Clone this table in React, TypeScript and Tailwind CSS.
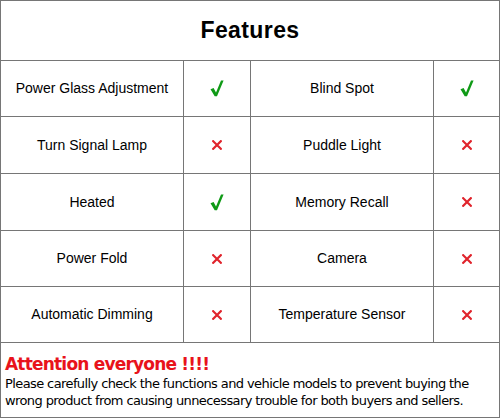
const rows: { left: string; leftOk: boolean; right: string; rightOk: boolean; h: string }[] = [
  { left: "Power Glass Adjustment", leftOk: true, right: "Blind Spot", rightOk: true, h: "h-[56px]" },
  { left: "Turn Signal Lamp", leftOk: false, right: "Puddle Light", rightOk: false, h: "h-[57px]" },
  { left: "Heated", leftOk: true, right: "Memory Recall", rightOk: false, h: "h-[57px]" },
  { left: "Power Fold", leftOk: false, right: "Camera", rightOk: false, h: "h-[56px]" },
  { left: "Automatic Dimming", leftOk: false, right: "Temperature Sensor", rightOk: false, h: "h-[56px]" },
];

function Mark({ ok }: { ok: boolean }) {
  if (ok) {
    return (
      <svg width="14" height="17" viewBox="0 0 14 17">
        <path d="M0.5 9.2 L3.6 7.9 L6 12.4 L11 0.6 L13.6 0.6 L7 16.2 L4.7 16.2 Z" fill="#0f9a16" />
      </svg>
    );
  }
  return (
    <svg width="10" height="10" viewBox="0 0 10 10">
      <path d="M1.2 1.2 L8.8 8.8 M8.8 1.2 L1.2 8.8" stroke="#e0242c" strokeWidth="2.2" strokeLinecap="square" />
    </svg>
  );
}

export default function App() {
  return (
    <div className="w-[500px] h-[419px] bg-white font-['Liberation_Sans',Arial,sans-serif] text-black">
      <div className="border-l border-t border-[#767676]">
        <div className="h-[60px] flex items-center justify-center border-r border-b border-[#767676]">
          <h1 className="text-[23px] font-bold tracking-[0.4px] pb-[1px]">Features</h1>
        </div>

        {rows.map((r) => (
          <div key={r.left} className={`flex ${r.h}`}>
            <div className="w-[183px] flex items-center justify-center border-r border-b border-[#767676] text-[14px]">
              {r.left}
            </div>
            <div className="w-[67px] flex items-center justify-center border-r border-b border-[#767676]">
              <Mark ok={r.leftOk} />
            </div>
            <div className="w-[183px] flex items-center justify-center border-r border-b border-[#767676] text-[14px]">
              {r.right}
            </div>
            <div className="w-[66px] flex items-center justify-center border-r border-b border-[#767676]">
              <Mark ok={r.rightOk} />
            </div>
          </div>
        ))}

        <div className="h-[75px] border-r border-b border-[#767676] px-[4px] pt-[11px] font-['DejaVu_Sans',Verdana,sans-serif]">
          <p className="text-[#e8131b] text-[17px] font-bold leading-[21px] tracking-[-0.8px]">Attention everyone !!!!</p>
          <p className="text-[13px] leading-[17px] tracking-[-0.6px]">
            Please carefully check the functions and vehicle models to prevent buying the wrong product from causing unnecessary trouble for both buyers and sellers.
          </p>
        </div>
      </div>
    </div>
  );
}
